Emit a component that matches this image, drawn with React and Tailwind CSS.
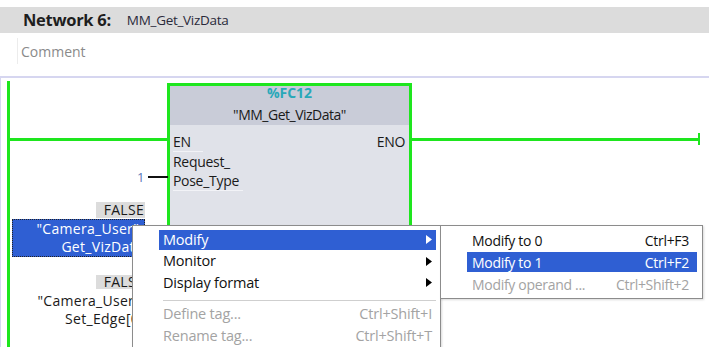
import React from "react";

const G = "bg-[#1ee61e]";

function Arrow({ white }) {
  return (
    <svg width="6" height="9" viewBox="0 0 6 9" className="block">
      <path d="M0 0 L6 4.5 L0 9 Z" fill={white ? "#ffffff" : "#000000"} />
    </svg>
  );
}

function MenuRow({ label, shortcut, arrow, active, disabled }) {
  return (
    <div className="h-[21.5px] flex items-center pl-[26px] pr-[4px]">
      <div
        className={
          "flex-1 h-[20px] flex items-center pl-[4px] pr-[4px] " +
          (active ? "bg-[#2f5fd3] text-white" : disabled ? "text-[#a3a3a3]" : "text-[#111]")
        }
      >
        <span className="flex-1">{label}</span>
        {shortcut && <span>{shortcut}</span>}
        {arrow && <Arrow white={active} />}
      </div>
    </div>
  );
}

export default function App() {
  return (
    <div className="w-[709px] h-[347px] bg-white relative overflow-hidden font-['Open_Sans',sans-serif]">
      <div className="h-[7px]" />
      <div className="h-[26px] bg-[#dcdcdc] flex items-center pl-[23px]">
        <span className="text-[16.5px] font-bold text-[#1e1e1e] tracking-[-0.3px]">Network 6:</span>
        <span className="ml-[16px] text-[13.5px] text-[#2a2a3a] tracking-[-0.3px]">MM_Get_VizData</span>
      </div>
      <div className="h-[5px]" />
      <div className="ml-[17px] h-[26px] border-l border-[#ececec] pl-[3px] flex items-center text-[14px] text-[#8a8a8a]">
        Comment
      </div>
      <div className="h-[12px]" />
      <div className="relative h-[271px] border-t-2 border-l border-[#d6d6f0] text-[#1a1a1a]">
        {/* left power rail */}
        <div className={"absolute left-[6px] top-[3px] w-[3px] bottom-0 " + G} />
        {/* EN line */}
        <div className={"absolute left-[6px] top-[60px] w-[163px] h-[3px] " + G} />
        {/* ENO line */}
        <div className={"absolute left-[408px] top-[60px] w-[291px] h-[3px] " + G} />
        <div className={"absolute left-[697px] top-[55px] w-[2px] h-[12px] " + G} />

        {/* FB box */}
        <div className="absolute left-[166px] top-[5px] w-[245px] bottom-[-10px] border-[3px] border-[#1ee61e] bg-[#e0e2e9] flex flex-col">
          <div className="h-[39px] bg-[#c9ccd8] flex flex-col items-center">
            <span className="text-[14px] font-bold text-[#2aa8b8] leading-[15px] -mt-[1px]">%FC12</span>
            <span className="text-[14px] font-medium text-[#1a1a1a] leading-[15px] mt-[7px] tracking-[-0.5px]">"MM_Get_VizData"</span>
          </div>
          <div className="relative flex-1 text-[14px] font-medium tracking-[-0.3px]">
            <div className="absolute left-[3px] top-[7px] leading-[19px]">
              <div className="border-b border-[#f2f3f7] w-[30px]">EN</div>
              <div className="w-[64px]">Request_</div>
              <div className="border-b border-[#f2f3f7] w-[70px]">Pose_Type</div>
            </div>
            <div className="absolute right-[4px] top-[7px] leading-[19px]">ENO</div>
          </div>
        </div>

        {/* parameter 1 */}
        <div className="absolute left-[136px] top-[91px] text-[13px] text-[#5a78b8] leading-[16px]">1</div>
        <div className="absolute left-[147px] top-[98px] w-[20px] h-[2px] bg-[#111]" />

        {/* operand 1 */}
        <div className="absolute left-[95px] top-[124px] w-[49px] h-[16px] bg-[#dcdcdc] text-[14px] leading-[16px] text-right pr-[1px] tracking-[0.3px]">FALSE</div>
        <div className="absolute left-[11px] top-[141px] w-[133px] h-[38px] bg-[#2f5fd3] border border-dotted border-[#222] text-white text-[14px] leading-[18px] text-right pr-[1px] tracking-[0.3px]">
          <div>"Camera_User".</div>
          <div>Get_VizData</div>
        </div>

        {/* operand 2 */}
        <div className="absolute left-[95px] top-[197px] w-[49px] h-[14px] bg-[#dcdcdc] text-[14px] leading-[14px] text-right pr-[1px] tracking-[0.3px]">FALSE</div>
        <div className="absolute left-[11px] top-[214px] w-[133px] text-[14px] leading-[18px] text-right pr-[1px] tracking-[0.3px]">
          <div>"Camera_User".</div>
          <div>Set_Edge[0]</div>
        </div>

        {/* context menu */}
        <div className="absolute left-[131px] top-[147px] w-[309px] h-[140px] bg-white border border-[#8c8c8c] pt-[3px] text-[14.5px] tracking-[-0.2px] shadow-[1px_1px_2px_rgba(0,0,0,0.15)]">
          <MenuRow label="Modify" arrow active />
          <MenuRow label="Monitor" arrow />
          <MenuRow label="Display format" arrow />
          <div className="ml-[30px] mr-[4px] my-[6px] h-px bg-[#cfcfcf]" />
          <div className="-mt-[3px]">
            <MenuRow label="Define tag..." shortcut="Ctrl+Shift+I" disabled />
            <MenuRow label="Rename tag..." shortcut="Ctrl+Shift+T" disabled />
          </div>
        </div>

        {/* submenu */}
        <div className="absolute left-[439px] top-[147px] w-[263px] h-[74px] bg-white border border-[#8c8c8c] pt-[3px] text-[14px] tracking-[-0.3px] shadow-[1px_1px_2px_rgba(0,0,0,0.15)]">
          <div className="h-[22px] flex items-center pl-[26px] pr-[5px]">
            <div className="flex-1 h-[20px] flex items-center pl-[5px] pr-[8px] text-[#111]">
              <span className="flex-1">Modify to 0</span><span>Ctrl+F3</span>
            </div>
          </div>
          <div className="h-[22px] flex items-center pl-[26px] pr-[5px]">
            <div className="flex-1 h-[20px] flex items-center pl-[5px] pr-[8px] bg-[#2f5fd3] text-white">
              <span className="flex-1">Modify to 1</span><span>Ctrl+F2</span>
            </div>
          </div>
          <div className="h-[22px] flex items-center pl-[26px] pr-[5px]">
            <div className="flex-1 h-[20px] flex items-center pl-[5px] pr-[8px] text-[#a3a3a3]">
              <span className="flex-1">Modify operand ...</span><span>Ctrl+Shift+2</span>
            </div>
          </div>
        </div>
      </div>
    </div>
  );
}
